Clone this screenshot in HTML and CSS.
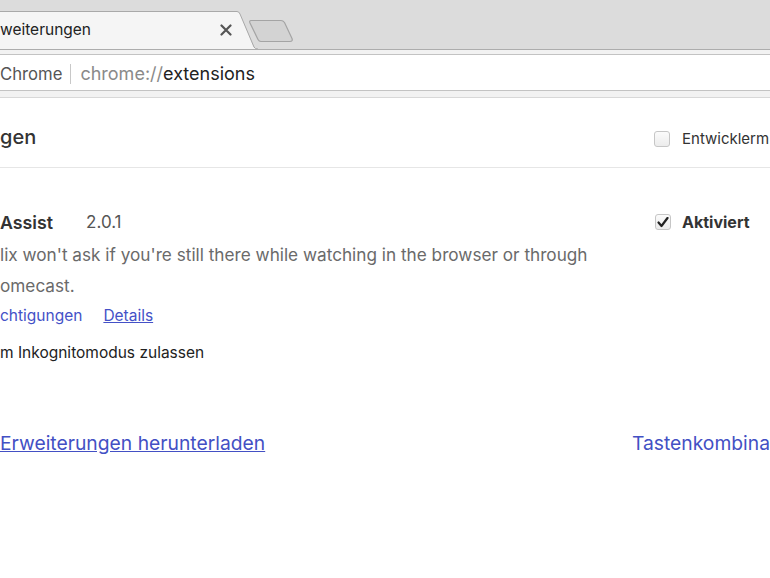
FILE: index.html
```html
<!DOCTYPE html>
<html lang="de">
<head>
<meta charset="utf-8">
<title>Erweiterungen</title>
<link rel="stylesheet" href="styles.css">
</head>
<body>
<div class="tabstrip">
  <div class="tab">
    <span class="tab-title">weiterungen</span>
    <span class="tab-close">
      <svg width="12" height="12" viewBox="0 0 12 12"><path d="M1.5 1.5 L10.5 10.5 M10.5 1.5 L1.5 10.5" stroke="#555" stroke-width="2.2" stroke-linecap="round"/></svg>
    </span>
  </div>
  <svg class="tab-edge" width="22" height="38" viewBox="0 0 22 38"><path d="M0 0.5 L1 0.5 Q3 0.5 4 3 L18 37 L22 38 L0 38 Z" fill="#f5f5f5"/><path d="M0 0.5 L1 0.5 Q3 0.5 4 3 L18 36 Q19 38 22 38" fill="none" stroke="#a9a9a9" stroke-width="1"/></svg>
  <svg class="newtab" width="46" height="24" viewBox="0 0 46 24"><path d="M3 1.5 L33 1.5 Q35 1.5 36.5 3.5 L44 19.5 Q45 22.5 42 22.5 L13 22.5 Q11 22.5 10 20.5 L2 4 Q1 1.5 3 1.5 Z" fill="#d3d3d3" stroke="#a4a4a4" stroke-width="1.2"/></svg>
</div>
<div class="toolbar">
  <div class="omnibox">
    <span class="chip">Chrome</span>
    <span class="sep"></span>
    <span class="url"><span class="scheme">chrome://</span>extensions</span>
  </div>
</div>
<main class="page">
  <header class="page-head">
    <h1 class="title">gen</h1>
    <label class="devmode"><span class="box"></span>Entwicklerm</label>
  </header>
  <section class="ext">
    <div class="ext-main">
      <div class="ext-name-row"><span class="ext-name">Assist</span><span class="ext-ver">2.0.1</span></div>
      <p class="ext-desc">lix won't ask if you're still there while watching in the browser or through<br>omecast.</p>
      <div class="ext-links"><a class="lnk">chtigungen</a><a class="lnk ul">Details</a></div>
      <div class="ext-incog">m Inkognitomodus zulassen</div>
    </div>
    <label class="enabled"><span class="box checked"><svg width="12" height="11" viewBox="0 0 12 11"><path d="M1.5 5.5 L4.5 9 L10.5 1" fill="none" stroke="#222" stroke-width="2.2" stroke-linecap="round" stroke-linejoin="round"/></svg></span>Aktiviert</label>
  </section>
  <footer class="page-foot">
    <a class="big-link ul">Erweiterungen herunterladen</a>
    <a class="big-link">Tastenkombina</a>
  </footer>
</main>
</body>
</html>
```
FILE: styles.css
```css
* { box-sizing: border-box; }
html, body { margin: 0; padding: 0; }
body {
  width: 770px;
  height: 578px;
  overflow: hidden;
  background: #fff;
  font-family: Inter, "Noto Sans", "Liberation Sans", sans-serif;
  color: #333;
}
.tabstrip {
  height: 49px;
  background: #dcdcdc;
  display: flex;
  align-items: flex-end;
}
.tab {
  width: 236px;
  height: 38px;
  background: #f5f5f5;
  border-top: 1px solid #a9a9a9;
  display: flex;
  align-items: center;
  justify-content: space-between;
  padding: 0 4px 2px 0;
}
.tab-title { font-size: 15.5px; color: #222; }
.tab-close { display: flex; }
.tab-edge { display: block; }
.newtab { display: block; margin: 0 0 6px -10px; }
.toolbar {
  background: #f2f2f2;
  border-top: 1px solid #adadad;
  border-bottom: 1px solid #d8d8d8;
  padding: 4px 0 6px;
}
.omnibox {
  height: 37px;
  margin-left: -4px;
  margin-right: -4px;
  background: #fff;
  border: 1px solid #c3c3c3;
  display: flex;
  align-items: center;
  font-size: 18px;
  padding-top: 2px;
}
.chip { color: #555; margin-left: 3px; font-size: 16.7px; }
.sep { width: 1px; height: 20px; background: #c8c8c8; margin: 0 9px 0 8px; }
.url { color: #222; }
.scheme { color: #8a8a8a; }
.page-head {
  height: 70px;
  border-bottom: 1px solid #e6e6e6;
  display: flex;
  align-items: center;
  justify-content: space-between;
  padding-top: 12px;
}
.title { margin: 0 0 3px; font-size: 20px; font-weight: 500; color: #333; }
.devmode, .enabled {
  display: flex;
  align-items: center;
  font-size: 15px;
  color: #333;
  width: 116px;
}
.box {
  width: 16px;
  height: 16px;
  border: 1px solid #c6c6c6;
  border-radius: 3px;
  background: linear-gradient(#fbfbfb, #ececec);
  margin-right: 12px;
  display: flex;
  align-items: center;
  justify-content: center;
}
.enabled { font-size: 16px; font-weight: 700; color: #333; align-self: flex-start; margin-top: 44px; width: 115px; }
.enabled .box { margin-right: 11px; }
.ext { display: flex; justify-content: space-between; }
.ext-main { padding-top: 42px; }
.ext-name-row { font-size: 17px; display: flex; gap: 33px; height: 24px; align-items: center; }
.ext-name { font-weight: 600; color: #333; font-size: 17.8px; }
.ext-ver { color: #555; }
.ext-desc { margin: 5px 0 0; font-size: 17.2px; line-height: 31px; color: #6a6a6a; }
.ext-links { display: flex; gap: 21px; font-size: 15.5px; margin-top: 5px; }
.lnk { color: #4451c7; }
.ul { text-decoration: underline; }
.ext-incog { margin-top: 18px; font-size: 15.5px; color: #222; }
.page-foot {
  display: flex;
  justify-content: space-between;
  margin-top: 69px;
  font-size: 19.3px;
}
.big-link { color: #4350c4; }
```
